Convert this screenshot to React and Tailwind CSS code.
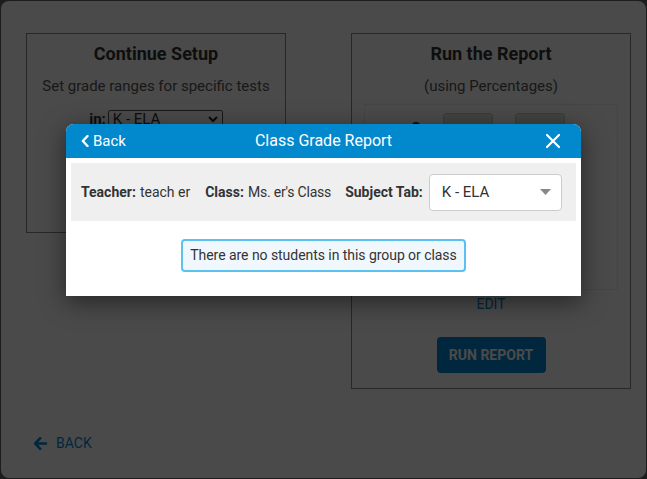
import { useState } from 'react';

const font = { fontFamily: 'Roboto, "Liberation Sans", sans-serif' };

const ChevronLeft = () => (
  <svg width="8" height="12" viewBox="0 0 8 12" className="shrink-0">
    <path d="M6.5 1 L1.8 6 L6.5 11" fill="none" stroke="currentColor" strokeWidth="2.4" strokeLinecap="round" strokeLinejoin="round" />
  </svg>
);

const CloseIcon = () => (
  <svg width="16" height="16" viewBox="0 0 16 16">
    <path d="M2 2 L14 14 M14 2 L2 14" stroke="currentColor" strokeWidth="2.2" strokeLinecap="round" />
  </svg>
);

const ArrowLeft = () => (
  <svg width="13" height="13" viewBox="0 0 13 13">
    <path d="M6.2 1.2 L1.2 6.5 L6.2 11.8 M1.6 6.5 H12" fill="none" stroke="currentColor" strokeWidth="2.6" strokeLinecap="round" strokeLinejoin="round" />
  </svg>
);

const SetupPage = () => (
  <div className="h-full rounded-lg bg-white relative">
    <div className="flex justify-between pl-[25px] pr-[15px] pt-[32px]">
      {/* Continue Setup */}
      <div className="w-[260px] h-[200px] border border-[#8a8a8a] flex flex-col items-center text-[#333]">
        <div className="mt-[9px] text-[18px] font-bold leading-[22px]">Continue Setup</div>
        <div className="mt-[12px] text-[15px] leading-[18px] text-[#555]">Set grade ranges for specific tests</div>
        <div className="mt-[13px] flex items-center gap-[2px] text-[15px]">
          <span className="font-bold">in:</span>
          <div className="w-[115px] h-[18px] border border-[#555] rounded-[2px] flex items-center justify-between px-[4px] text-[15px] leading-none">
            <span>K - ELA</span>
            <svg width="10" height="7" viewBox="0 0 10 7"><path d="M1 1 L5 5 L9 1" fill="none" stroke="#222" strokeWidth="2" /></svg>
          </div>
        </div>
      </div>

      {/* Run the Report */}
      <div className="w-[280px] h-[356px] border border-[#8a8a8a] flex flex-col items-center text-[#333]">
        <div className="mt-[9px] text-[18px] font-bold leading-[22px]">Run the Report</div>
        <div className="mt-[12px] text-[15px] leading-[18px] text-[#555]">(using Percentages)</div>
        <div className="mt-[9px] w-[254px] h-[186px] border border-[#eee] flex justify-center gap-[22px] pt-[8px] pl-[14px]">
          <span className="text-[18px] font-bold mt-[2px] -ml-[20px]">0</span>
          <div className="w-[50px] h-[24px] rounded-[3px] bg-[#dbe8dc] border border-[#c9d6ca]" />
          <div className="w-[50px] h-[24px] rounded-[3px] bg-[#dbe8dc] border border-[#c9d6ca]" />
        </div>
        <div className="mt-[4px] text-[14px] text-[#0288d1]">EDIT</div>
        <button className="mt-[22px] w-[109px] h-[36px] rounded-[4px] bg-[#0288d1] text-white text-[14px] font-bold">RUN REPORT</button>
      </div>
    </div>

    <div className="mt-[44px] ml-[33px] flex items-center gap-[9px] text-[#0288d1] text-[14px]">
      <ArrowLeft />
      <span>BACK</span>
    </div>
  </div>
);

export default function App() {
  const [subject] = useState('K - ELA');

  return (
    <div className="w-[647px] h-[479px] bg-[#666] p-px relative overflow-hidden" style={font}>
      <SetupPage />

      {/* overlay */}
      <div className="absolute inset-0 bg-black/[0.71] flex justify-center pt-[124px]">
        <div className="w-[515px] h-[172px] bg-white rounded-t-[8px] shadow-[0_6px_24px_rgba(0,0,0,0.5)] flex flex-col">
          <div className="h-[34px] rounded-t-[8px] bg-[#0288cc] text-white flex items-center justify-between px-[15px]">
            <div className="flex items-center gap-[4px] text-[15px] w-[80px]">
              <ChevronLeft />
              <span>Back</span>
            </div>
            <div className="text-[16px]">Class Grade Report</div>
            <div className="w-[80px] flex justify-end pr-[5px]"><CloseIcon /></div>
          </div>

          <div className="mx-[5px] mt-[5px] h-[58px] bg-[#efefef] flex items-center px-[10px] text-[14px] text-[#333]">
            <span className="font-bold">Teacher:</span>
            <span className="ml-[4px]">teach er</span>
            <span className="font-bold ml-[15px]">Class:</span>
            <span className="ml-[4px] tracking-[-0.2px]">Ms. er's Class</span>
            <span className="font-bold ml-[14px]">Subject Tab:</span>
            <div className="ml-[6px] w-[133px] h-[37px] bg-white border border-[#ccc] rounded-[4px] flex items-center justify-between pl-[12px] pr-[10px] text-[15px] text-[#333]">
              <span>{subject}</span>
              <svg width="11" height="6" viewBox="0 0 11 6"><path d="M0 0 H11 L5.5 6 Z" fill="#888" /></svg>
            </div>
          </div>

          <div className="flex justify-center mt-[18px]">
            <div className="h-[33px] px-[7px] flex items-center border-2 border-[#5bc2ef] bg-[#f0f8fe] rounded-[4px] text-[14px] text-[#333] tracking-[-0.05px]">
              There are no students in this group or class
            </div>
          </div>
        </div>
      </div>
    </div>
  );
}
